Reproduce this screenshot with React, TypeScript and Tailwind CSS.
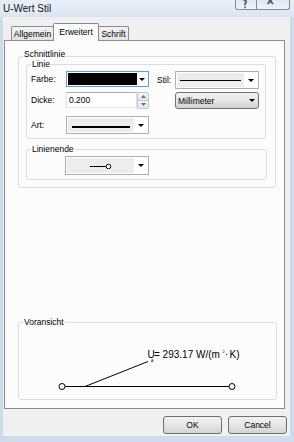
import React from "react";

const Arrow = ({ color = "#000" }: { color?: string }) => (
  <svg width="6" height="3" viewBox="0 0 6 3" className="block">
    <path d="M0 0h6L3 3z" fill={color} />
  </svg>
);

function GroupBox({
  title,
  className,
  labelTop = "-top-[5px]",
  children,
}: {
  title: string;
  className: string;
  labelTop?: string;
  children?: React.ReactNode;
}) {
  return (
    <div className={`relative rounded-[3px] border border-[#d5dfe5] ${className}`}>
      <span className={`absolute ${labelTop} left-[4px] bg-[#fcfcfc] px-[1px] leading-[8px]`}>
        {title}
      </span>
      {children}
    </div>
  );
}

// white combo with a grey sample area (Art, Stil, Linienende)
function SampleCombo({ className, children }: { className: string; children: React.ReactNode }) {
  return (
    <div className={`flex border border-[#acb0b6] bg-white p-[1px] ${className}`}>
      <div className="flex flex-1 items-center justify-center bg-[#ededed]">{children}</div>
      <div className="flex w-[13px] items-center justify-center">
        <Arrow />
      </div>
    </div>
  );
}

function Label({ children, className = "w-[35px]" }: { children: React.ReactNode; className?: string }) {
  return <span className={`flex items-center leading-[10px] ${className}`}>{children}</span>;
}

function WinButton({ children, className }: { children: React.ReactNode; className: string }) {
  return (
    <div
      className={`flex items-center rounded-[3px] border border-[#707070] bg-linear-to-b from-[#f2f2f2] via-[#e6e6e6] to-[#d3d3d3] leading-[10px] ${className}`}
    >
      {children}
    </div>
  );
}

function TitleBar() {
  return (
    <div className="flex h-[17px] shrink-0 bg-linear-to-b from-[#e8eff8] to-[#dae5f2]">
      <span className="ml-[3px] mt-[3px] text-[10px] leading-[12px] text-[#111] [text-shadow:0_0_5px_#fff]">
        U-Wert Stil
      </span>
      <div className="ml-auto mr-[4px] flex h-[10px]">
        <div className="w-[22px] rounded-bl-[3px] border border-t-0 border-[#7f8ea3] bg-linear-to-b from-[#dfe7f1] to-[#eef3f9]">
          <svg width="20" height="9" viewBox="0 0 20 9" className="block">
            <path d="M7.5 0.5C9.5 0 11 1 10 2.6L9 3.8V5.6" stroke="#4a5a70" strokeWidth="1.6" fill="none" />
            <rect x="8.2" y="6.6" width="1.6" height="1.6" fill="#4a5a70" />
          </svg>
        </div>
        <div className="w-[33px] rounded-br-[3px] border border-t-0 border-l-0 border-[#7f8ea3] bg-linear-to-b from-[#dfe7f1] to-[#eef3f9]">
          <svg width="32" height="9" viewBox="0 0 32 9" className="block">
            <path d="M10.5 -2L16 4M16 -2L10.5 4" stroke="#4a5a70" strokeWidth="1.8" />
          </svg>
        </div>
      </div>
    </div>
  );
}

function Tabs() {
  return (
    <div className="flex h-[23px] shrink-0 items-end pl-[8px]">
      <div className="flex h-[14px] w-[43px] items-center justify-center rounded-t-[2px] border border-b-0 border-[#898c95] bg-linear-to-b from-[#f4f4f4] to-[#e2e2e2] leading-[10px]">
        Allgemein
      </div>
      <div className="relative z-10 -mb-px -ml-px flex h-[18px] w-[46px] items-start justify-center rounded-t-[2px] border border-b-0 border-[#898c95] bg-[#fcfcfc] pt-[3px] leading-[10px]">
        Erweitert
      </div>
      <div className="-ml-px flex h-[14px] w-[31px] items-center justify-center rounded-t-[2px] border border-b-0 border-[#898c95] bg-linear-to-b from-[#f4f4f4] to-[#e2e2e2] leading-[10px]">
        Schrift
      </div>
    </div>
  );
}

function Preview() {
  return (
    <svg width="257" height="76" viewBox="0 0 257 76" className="block">
      <line x1="46" y1="63.5" x2="210" y2="63.5" stroke="#000" strokeWidth="1" />
      <line x1="66" y1="63.5" x2="129" y2="38.5" stroke="#000" strokeWidth="1" />
      <circle cx="43" cy="63.5" r="3" fill="#fff" stroke="#000" strokeWidth="1" />
      <circle cx="213" cy="63.5" r="3" fill="#fff" stroke="#000" strokeWidth="1" />
      <g fontFamily="'Liberation Sans', Arial, sans-serif" fill="#000">
        <text x="128.5" y="35" fontSize="10">U</text>
        <text x="132" y="38.5" fontSize="3.5">A</text>
        <text x="135" y="35" fontSize="10">= 293.17 W/(m</text>
        <text x="203.5" y="29.5" fontSize="4">2</text>
        <text x="206" y="35" fontSize="10">·</text>
        <text x="210.5" y="35" fontSize="10">K)</text>
      </g>
    </svg>
  );
}

export default function App() {
  return (
    <div className="flex h-[442px] w-[294px] flex-col overflow-hidden bg-[#cddbec] font-['Liberation_Sans',Arial,sans-serif] text-[8.5px] text-black">
      <TitleBar />
      <div className="ml-[3px] flex h-[419px] w-[287px] flex-col bg-[#f0f0f0]">
        <Tabs />
        <div className="ml-[1px] flex h-[369px] w-[281px] flex-col border border-[#898c95] bg-[#fcfcfc]">
          <GroupBox
            title="Schnittlinie"
            labelTop="-top-[7px]"
            className="ml-[13px] mt-[15px] h-[132px] w-[258px]"
          >
            <GroupBox title="Linie" className="ml-[7px] mt-[7px] h-[75px] w-[240px]">
              {/* Farbe / Stil */}
              <div className="ml-[4px] mt-[6px] flex h-[18px] items-start">
                <Label className="h-[16px] w-[35px]">Farbe:</Label>
                <div className="flex h-[16px] w-[83px] border border-[#569de5] bg-white p-[1px]">
                  <div className="w-[69px] bg-black" />
                  <div className="flex flex-1 items-center justify-center">
                    <Arrow />
                  </div>
                </div>
                <Label className="ml-[8px] h-[18px] w-[18px]">Stil:</Label>
                <SampleCombo className="h-[18px] w-[84px]">
                  <div className="h-px w-[61px] bg-black" />
                </SampleCombo>
              </div>
              {/* Dicke / Einheit */}
              <div className="ml-[4px] mt-[3px] flex h-[17px] items-start">
                <Label className="h-[16px] w-[35px]">Dicke:</Label>
                <div className="flex h-[16px] w-[71px] items-center border border-[#abadb3] border-b-[#e3e9ef] border-l-[#e2e3ea] border-r-[#dbdfe6] bg-white pl-[2px] leading-[10px]">
                  0.200
                </div>
                <div className="flex h-[17px] w-[12px] flex-col">
                  <div className="flex flex-1 items-center justify-center rounded-tr-[2px] border border-[#c3c7cd] bg-linear-to-b from-[#f5f5f5] to-[#e4e6e9]">
                    <svg width="5" height="3" viewBox="0 0 5 3" className="block">
                      <path d="M0 3h5L2.5 0z" fill="#5b6f8c" />
                    </svg>
                  </div>
                  <div className="-mt-px flex flex-1 items-center justify-center rounded-br-[2px] border border-[#c3c7cd] bg-linear-to-b from-[#f5f5f5] to-[#e4e6e9]">
                    <svg width="5" height="3" viewBox="0 0 5 3" className="block">
                      <path d="M0 0h5L2.5 3z" fill="#5b6f8c" />
                    </svg>
                  </div>
                </div>
                <WinButton className="ml-[26px] h-[17px] w-[84px] justify-between pl-[2px] pr-[3px]">
                  <span>Millimeter</span>
                  <Arrow />
                </WinButton>
              </div>
              {/* Art */}
              <div className="ml-[4px] mt-[7px] flex h-[18px] items-start">
                <Label className="h-[18px] w-[35px]">Art:</Label>
                <SampleCombo className="h-[18px] w-[83px]">
                  <div className="mt-[3px] h-[2px] w-[58px] bg-black" />
                </SampleCombo>
              </div>
            </GroupBox>
            <GroupBox title="Linienende" className="ml-[7px] mt-[10px] h-[31px] w-[241px]">
              <SampleCombo className="ml-[38px] mt-[6px] h-[19px] w-[84px]">
                <svg width="22" height="6" viewBox="0 0 22 6" className="block">
                  <line x1="0" y1="3.5" x2="16" y2="3.5" stroke="#000" strokeWidth="1" />
                  <circle cx="18.5" cy="3.5" r="2.3" fill="#fff" stroke="#000" strokeWidth="1" />
                </svg>
              </SampleCombo>
            </GroupBox>
          </GroupBox>

          <GroupBox title="Voransicht" className="mb-[8px] ml-[13px] mt-auto h-[78px] w-[259px]">
            <Preview />
          </GroupBox>
        </div>

        <div className="mt-[7px] flex justify-end gap-[6px] pr-[3px]">
          <WinButton className="h-[18px] w-[59px] justify-center">OK</WinButton>
          <WinButton className="h-[18px] w-[59px] justify-center">Cancel</WinButton>
        </div>
      </div>
    </div>
  );
}
